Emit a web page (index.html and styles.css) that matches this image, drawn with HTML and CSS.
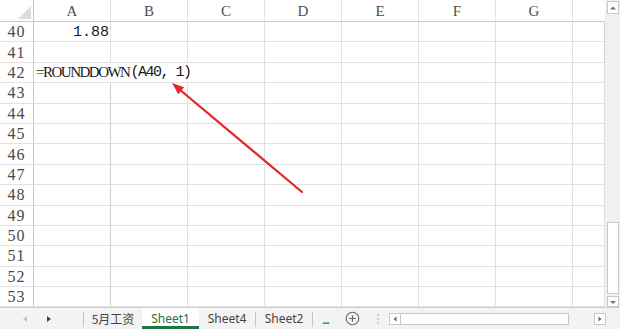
FILE: index.html
```html
<!DOCTYPE html>
<html lang="zh-CN">
<head>
<meta charset="utf-8">
<title>Sheet</title>
<link rel="stylesheet" href="styles.css">
</head>
<body>
<div class="app">
  <div class="main">
    <div class="sheet">
      <div class="grid">
        <div class="corner"></div>
        <div class="ch">A</div><div class="ch">B</div><div class="ch">C</div><div class="ch">D</div><div class="ch">E</div><div class="ch">F</div><div class="ch">G</div><div class="ch last"></div>

        <div class="rh">40</div><div class="c num">1.88</div><div class="c"></div><div class="c"></div><div class="c"></div><div class="c"></div><div class="c"></div><div class="c"></div><div class="c"></div>
        <div class="rh">41</div><div class="c"></div><div class="c"></div><div class="c"></div><div class="c"></div><div class="c"></div><div class="c"></div><div class="c"></div><div class="c"></div>
        <div class="rh">42</div><div class="c span3 formula"><span class="fn">=ROUNDDOWN</span><span class="args">(A40, 1)</span></div><div class="c"></div><div class="c"></div><div class="c"></div><div class="c"></div><div class="c"></div>
        <div class="rh">43</div><div class="c"></div><div class="c"></div><div class="c"></div><div class="c"></div><div class="c"></div><div class="c"></div><div class="c"></div><div class="c"></div>
        <div class="rh">44</div><div class="c"></div><div class="c"></div><div class="c"></div><div class="c"></div><div class="c"></div><div class="c"></div><div class="c"></div><div class="c"></div>
        <div class="rh">45</div><div class="c"></div><div class="c"></div><div class="c"></div><div class="c"></div><div class="c"></div><div class="c"></div><div class="c"></div><div class="c"></div>
        <div class="rh">46</div><div class="c"></div><div class="c"></div><div class="c"></div><div class="c"></div><div class="c"></div><div class="c"></div><div class="c"></div><div class="c"></div>
        <div class="rh">47</div><div class="c"></div><div class="c"></div><div class="c"></div><div class="c"></div><div class="c"></div><div class="c"></div><div class="c"></div><div class="c"></div>
        <div class="rh">48</div><div class="c"></div><div class="c"></div><div class="c"></div><div class="c"></div><div class="c"></div><div class="c"></div><div class="c"></div><div class="c"></div>
        <div class="rh">49</div><div class="c"></div><div class="c"></div><div class="c"></div><div class="c"></div><div class="c"></div><div class="c"></div><div class="c"></div><div class="c"></div>
        <div class="rh">50</div><div class="c"></div><div class="c"></div><div class="c"></div><div class="c"></div><div class="c"></div><div class="c"></div><div class="c"></div><div class="c"></div>
        <div class="rh">51</div><div class="c"></div><div class="c"></div><div class="c"></div><div class="c"></div><div class="c"></div><div class="c"></div><div class="c"></div><div class="c"></div>
        <div class="rh">52</div><div class="c"></div><div class="c"></div><div class="c"></div><div class="c"></div><div class="c"></div><div class="c"></div><div class="c"></div><div class="c"></div>
        <div class="rh">53</div><div class="c"></div><div class="c"></div><div class="c"></div><div class="c"></div><div class="c"></div><div class="c"></div><div class="c"></div><div class="c"></div>
      </div>
      <svg class="arrow" width="605" height="307" viewBox="0 0 605 307">
        <line x1="302" y1="192" x2="179" y2="89" stroke="#e2272b" stroke-width="2.2" stroke-linecap="round"/>
        <polygon points="172,83 178.3,94.2 184.1,87.3" fill="#e2272b"/>
      </svg>
    </div>
    <div class="vscroll">
      <div class="vbtn"><svg width="10" height="10" viewBox="0 0 10 10"><polygon points="2,6.5 8,6.5 5,3.5" fill="#707070"/></svg></div>
      <div class="vtrack"></div>
      <div class="vthumb"></div>
      <div class="vbtn down"><svg width="10" height="10" viewBox="0 0 10 10"><polygon points="2,4 8,4 5,7" fill="#707070"/></svg></div>
    </div>
  </div>
  <div class="tabbar">
    <div class="nav"><svg width="8" height="10" viewBox="0 0 8 10"><polygon points="6,2 6,8 2,5" fill="#c4c4c4"/></svg></div>
    <div class="nav"><svg width="8" height="10" viewBox="0 0 8 10"><polygon points="2,2 2,8 6,5" fill="#2f4f3a"/></svg></div>
    <div class="gap"></div>
    <div class="sep"></div>
    <div class="tab w58">5月工资</div>
    <div class="tab active">Sheet1</div>
    <div class="tab w56">Sheet4</div>
    <div class="sep"></div>
    <div class="tab w56">Sheet2</div>
    <div class="sep"></div>
    <div class="more">...</div>
    <div class="add"><svg width="15" height="15" viewBox="0 0 15 15"><circle cx="7.5" cy="7.5" r="6.3" fill="none" stroke="#6a6a6a" stroke-width="1.1"/><path d="M7.5 4.2v6.6M4.2 7.5h6.6" stroke="#6a6a6a" stroke-width="1.2"/></svg></div>
    <div class="dots"><svg width="4" height="12" viewBox="0 0 4 12"><circle cx="2" cy="2" r="0.9" fill="#bdbdbd"/><circle cx="2" cy="6" r="0.9" fill="#bdbdbd"/><circle cx="2" cy="10" r="0.9" fill="#bdbdbd"/></svg></div>
    <div class="hscroll">
      <div class="hbtn"><svg width="8" height="8" viewBox="0 0 8 8"><polygon points="5.5,1.5 5.5,6.5 2.5,4" fill="#6a6a6a"/></svg></div>
      <div class="hthumb"></div>
      <div class="htrack"></div>
      <div class="hbtn"><svg width="8" height="8" viewBox="0 0 8 8"><polygon points="2.5,1.5 2.5,6.5 5.5,4" fill="#6a6a6a"/></svg></div>
    </div>
  </div>
</div>
</body>
</html>
```

FILE: styles.css
```css
* { box-sizing: border-box; }
html, body { margin: 0; padding: 0; background: #fff; }
body { width: 620px; height: 329px; overflow: hidden; }

.app { display: flex; flex-direction: column; width: 620px; height: 329px; }

.main { display: flex; height: 307px; overflow: hidden; }

.sheet { position: relative; width: 605px; height: 307px; overflow: hidden; }

.grid {
  display: grid;
  grid-template-columns: 34px repeat(7, 77px) 32px;
  grid-template-rows: 22px repeat(14, 20.4px);
  width: 605px;
}

.corner {
  position: relative;
  border-right: 1px solid #c9c9c9;
  border-bottom: 1px solid #c9c9c9;
  background: #fff;
}
.corner::after {
  content: "";
  position: absolute;
  right: 2px;
  bottom: 2px;
  width: 13px;
  height: 13px;
  background: #dcdcdc;
  clip-path: polygon(100% 0, 100% 100%, 0 100%);
}

.ch {
  display: flex;
  align-items: center;
  justify-content: center;
  font-family: "Liberation Serif", "DejaVu Serif", serif;
  font-size: 15px;
  color: #505050;
  border-right: 1px solid #e1e1e1;
  border-bottom: 1px solid #c9c9c9;
  padding-top: 1px;
}
.ch.last { border-right: none; }

.rh {
  display: flex;
  align-items: center;
  justify-content: center;
  font-family: "Liberation Serif", "DejaVu Serif", serif;
  font-size: 16px;
  letter-spacing: 1px;
  color: #4a4a4a;
  border-right: 1px solid #c9c9c9;
  border-bottom: 1px solid #e1e1e1;
  padding-top: 1px;
}

.c {
  border-right: 1px solid #e1e1e1;
  border-bottom: 1px solid #e1e1e1;
  display: flex;
  align-items: center;
  white-space: nowrap;
  color: #1a1a1a;
}
.grid .c:nth-child(9n) { border-right-color: #d0d0d0; }

.num {
  justify-content: flex-end;
  font-family: "Liberation Mono", monospace;
  font-size: 15px;
  padding-right: 1px;
  padding-top: 1px;
}

.span3 { grid-column: span 3; }

.formula { padding-left: 2px; padding-top: 1px; }
.fn {
  font-family: "Liberation Serif", serif;
  font-size: 15px;
  letter-spacing: -1.5px;
}
.args {
  font-family: "Liberation Mono", monospace;
  font-size: 15px;
  letter-spacing: -1.5px;
  margin-left: 1px;
}

.arrow { position: absolute; left: 0; top: 0; pointer-events: none; }

.vscroll {
  width: 15px;
  height: 307px;
  background: #f0f0f0;
  display: flex;
  flex-direction: column;
  align-items: center;
  padding: 1px 0 0 1px;
}
.vbtn {
  width: 12px;
  height: 13px;
  background: #fff;
  border: 1px solid #c8c8c8;
  display: flex;
  align-items: center;
  justify-content: center;
}
.vbtn.down { height: 11px; }
.vtrack { flex: 1; }
.vthumb {
  width: 12px;
  height: 72px;
  background: #fff;
  border: 1px solid #c8c8c8;
  margin-bottom: 2px;
}

.tabbar {
  height: 22px;
  background: #f3f3f3;
  border-top: 1px solid #d0d0d0;
  display: flex;
  align-items: stretch;
  padding-left: 13px;
  font-family: "Noto Sans", "Noto Sans CJK SC", sans-serif;
  font-size: 12px;
  color: #444;
}
.nav { width: 24px; display: flex; align-items: center; justify-content: center; }
.gap { width: 22px; }
.sep { width: 1px; background: #c6c6c6; margin: 4px 0 2px; }
.tab {
  display: flex;
  align-items: center;
  justify-content: center;
  line-height: 1;
}
.w58 { width: 58px; font-family: "Noto Sans CJK SC", sans-serif; }
.w56 { width: 56px; }
.tab.active {
  width: 57px;
  background: #fff;
  color: #217346;
  border-bottom: 3px solid #217346;
  padding-top: 3px;
}
.more {
  width: 25px;
  display: flex;
  align-items: center;
  justify-content: center;
  color: #217346;
  font-weight: bold;
  font-size: 11px;
  letter-spacing: -1px;
  padding-top: 2px;
}
.add { width: 28px; display: flex; align-items: center; justify-content: center; }
.dots { width: 23px; display: flex; align-items: center; justify-content: center; }
.hscroll {
  width: 217px;
  display: flex;
  align-items: center;
  padding: 1px 0;
}
.hbtn {
  width: 12px;
  height: 12px;
  background: #fff;
  border: 1px solid #c8c8c8;
  display: flex;
  align-items: center;
  justify-content: center;
}
.hthumb {
  width: 168px;
  height: 12px;
  background: #fff;
  border: 1px solid #c8c8c8;
  border-left: none;
}
.htrack { flex: 1; }
```
